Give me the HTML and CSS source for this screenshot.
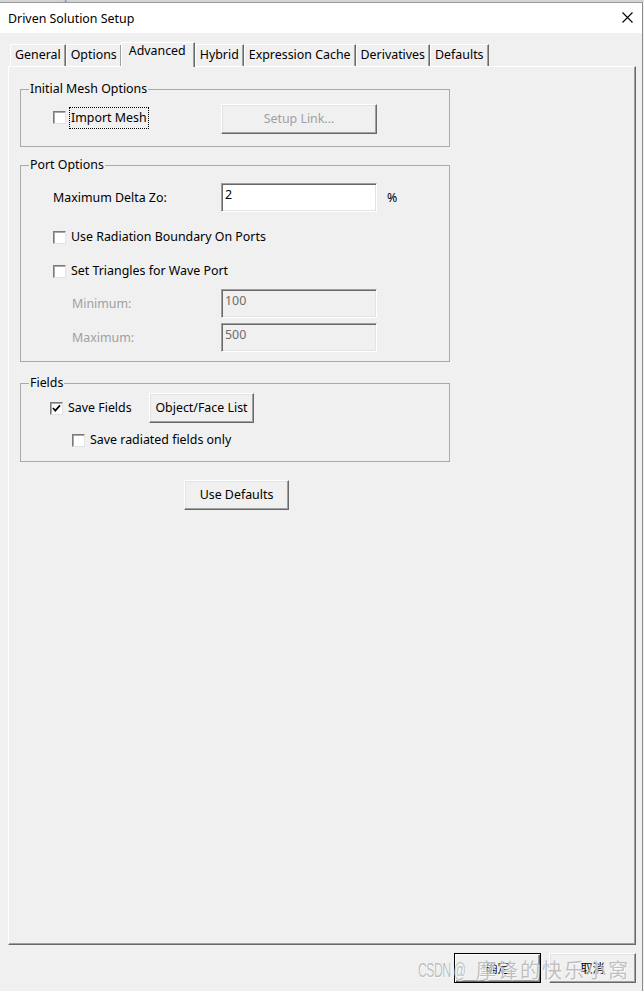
FILE: index.html
```html
<!DOCTYPE html>
<html>
<head>
<meta charset="utf-8">
<link rel="stylesheet" href="styles.css">
</head>
<body>
<div class="bgstrip"><span>• ru33Design1 - Modeler</span></div>
<div class="window">
  <div class="titlebar">
    <span class="title">Driven Solution Setup</span>
    <svg class="close" width="11" height="11" viewBox="0 0 11 11"><path d="M0.5 0.5 L10.5 10.5 M10.5 0.5 L0.5 10.5" stroke="#000" stroke-width="1.1" fill="none"/></svg>
  </div>
  <div class="body">
    <div class="tabs">
      <div class="tab">General</div>
      <div class="tab">Options</div>
      <div class="tab active">Advanced</div>
      <div class="tab">Hybrid</div>
      <div class="tab">Expression Cache</div>
      <div class="tab">Derivatives</div>
      <div class="tab">Defaults</div>
    </div>
    <div class="panel">
      <fieldset class="group g1">
        <legend>Initial Mesh Options</legend>
        <div class="row r-mesh">
          <div class="lead lead-wide">
            <span class="cb"></span>
            <span class="focus">Import Mesh</span>
          </div>
          <div class="btn btn-wide disabled">Setup Link...</div>
        </div>
      </fieldset>

      <fieldset class="group g2">
        <legend>Port Options</legend>
        <div class="row r-delta">
          <div class="lead lead-wide"><span class="lbl">Maximum Delta Zo:</span></div>
          <div class="edit">2</div>
          <span class="pct">%</span>
        </div>
        <div class="row r-check r-rad">
          <div class="lead lead-wide"><span class="cb"></span><span class="lbl">Use Radiation Boundary On Ports</span></div>
        </div>
        <div class="row r-check r-tri">
          <div class="lead lead-wide"><span class="cb"></span><span class="lbl">Set Triangles for Wave Port</span></div>
        </div>
        <div class="row r-min">
          <div class="lead lead-sub"><span class="lbl dim">Minimum:</span></div>
          <div class="edit off">100</div>
        </div>
        <div class="row r-max">
          <div class="lead lead-sub"><span class="lbl dim">Maximum:</span></div>
          <div class="edit off">500</div>
        </div>
      </fieldset>

      <fieldset class="group g3">
        <legend>Fields</legend>
        <div class="row r-save">
          <div class="lead lead-fields">
            <span class="cb on"><svg width="11" height="11" viewBox="0 0 11 11"><path d="M2 5 L4.3 7.6 L9 2.4" stroke="#000" stroke-width="1.7" fill="none"/></svg></span>
            <span class="lbl">Save Fields</span>
          </div>
          <div class="btn btn-obj">Object/Face List</div>
        </div>
        <div class="row r-check r-radonly">
          <div class="lead"><span class="cb"></span><span class="lbl">Save radiated fields only</span></div>
        </div>
      </fieldset>

      <div class="defaults-wrap">
        <div class="btn btn-def">Use Defaults</div>
      </div>
    </div>
    <div class="footer">
      <div class="btn btn-ok default">确定</div>
      <div class="btn btn-ok">取消</div>
      <div class="watermark"><span class="wm-latin">CSDN @</span><span class="wm-cjk">摩锋的快乐小窝</span></div>
    </div>
  </div>
</div>
</body>
</html>
```
FILE: styles.css
```css
* { box-sizing: border-box; }
html, body {
  margin: 0;
  padding: 0;
}
body {
  width: 644px;
  height: 991px;
  overflow: hidden;
  background: #f0f0f0;
  font-family: "Noto Sans", "Noto Sans CJK SC", sans-serif;
  font-size: 12.4px;
  line-height: 16px;
  color: #000;
}
.bgstrip {
  height: 2px;
  overflow: hidden;
  background: #d4d4d4;
  color: #8a8a8a;
  padding-left: 2px;
}
.bgstrip span {
  display: block;
  margin-top: -11px;
  font-size: 12px;
  line-height: 14px;
}
.window {
  width: 643px;
  height: 989px;
  border-top: 1px solid #9a9a9a;
  border-right: 1px solid #8c8c8c;
  background: #f0f0f0;
}
.titlebar {
  height: 30px;
  background: #fff;
  display: flex;
  align-items: center;
  padding-left: 8px;
  padding-right: 9px;
}
.title {
  flex: 1;
  font-size: 12.4px;
  padding-top: 1px;
}
.close {
  display: block;
  margin-top: -1px;
}
.body {
  display: flex;
  flex-direction: column;
}
.tabs {
  display: flex;
  align-items: flex-end;
  height: 24px;
  margin-top: 9px;
  padding-left: 10px;
}
.tab {
  height: 22px;
  padding: 2px 4px 0 4px;
  border-top: 1px solid #fff;
  border-left: 1px solid #fff;
  border-right: 1px solid #696969;
  box-shadow: inset -1px 0 #a0a0a0;
  white-space: nowrap;
  background: #f0f0f0;
}
.tab.active {
  height: 25px;
  margin: 0 -1px -1px -1px;
  padding: 0 8px 0 7px;
  position: relative;
  z-index: 1;
}
.tab.active + .tab { margin-left: 1px; }
.panel {
  margin-left: 8px;
  width: 628px;
  height: 879px;
  border-top: 1px solid #fff;
  border-left: 1px solid #fff;
  border-right: 1px solid #696969;
  border-bottom: 1px solid #696969;
  box-shadow: inset -1px -1px #a0a0a0;
  padding-left: 11px;
  padding-top: 14px;
}
.group {
  width: 430px;
  margin: 0;
  padding: 0;
  border: 1px solid #a9a9a9;
  min-width: 0;
}
.group legend {
  margin-left: 8px;
  padding: 0 1px;
  line-height: 16px;
}
.g1 { padding-bottom: 12px; }
.g2 { margin-top: 10px; padding-bottom: 9px; }
.g3 { margin-top: 13px; padding-bottom: 13px; }
.row {
  display: flex;
  align-items: center;
  padding-left: 32px;
}
.lead {
  display: flex;
  align-items: center;
  flex: none;
}
.lead-wide { width: 168px; }
.lead-sub { padding-left: 19px; width: 168px; }
.lead-fields { width: 99px; }
.r-mesh { margin-top: 7px; height: 30px; }
.r-mesh .cb { margin-top: -3px; }
.r-delta { margin-top: 10px; height: 29px; }
.r-check { height: 16px; }
.r-rad { margin-top: 17px; }
.r-tri { margin-top: 18px; }
.r-min { margin-top: 10px; height: 29px; }
.r-max { margin-top: 5px; height: 29px; }
.r-save { margin-top: 2px; height: 30px; padding-left: 29px; }
.r-radonly { margin-top: 9px; padding-left: 51px; }
.cb {
  display: inline-block;
  flex: none;
  width: 13px;
  height: 13px;
  background: #fff;
  border: 1px solid;
  border-color: #7a7a7a #e3e3e3 #e3e3e3 #7a7a7a;
  box-shadow: inset 1px 1px #a9a9a9;
  margin-right: 5px;
}
.cb svg { display: block; }
.lbl { white-space: nowrap; }
.focus {
  outline: 1px dotted #000;
  outline-offset: 0;
  padding: 2px 1px 2px 1px;
  line-height: 16px;
  margin-left: -1px;
  margin-top: -3px;
  white-space: nowrap;
}
.dim { color: #a0a0a0; }
.btn {
  display: flex;
  align-items: center;
  justify-content: center;
  flex: none;
  height: 30px;
  background: #f0f0f0;
  border: 1px solid;
  border-color: #fff #696969 #696969 #fff;
  box-shadow: inset -1px -1px #a0a0a0, inset 1px 1px #e3e3e3;
  white-space: nowrap;
}
.btn.disabled { color: #a0a0a0; }
.btn-wide { width: 156px; }
.btn-obj { width: 105px; }
.btn-def { width: 105px; }
.edit {
  flex: none;
  width: 156px;
  height: 29px;
  background: #fff;
  border: 1px solid;
  border-color: #a0a0a0 #fff #fff #a0a0a0;
  box-shadow: inset 1px 1px #696969, inset -1px -1px #e3e3e3;
  padding: 3px 3px 0 3px;
}
.edit.off {
  background: #f0f0f0;
  color: #6d6d6d;
}
.pct { margin-left: 10px; }
.defaults-wrap {
  display: flex;
  width: 430px;
  margin-top: 18px;
  padding-left: 164px;
}
.footer {
  display: flex;
  justify-content: flex-end;
  gap: 8px;
  padding-right: 6px;
  margin-top: 8px;
  position: relative;
}
.btn-ok {
  width: 87px;
  height: 30px;
  font-family: "Noto Sans CJK SC", sans-serif;
  font-size: 12px;
}
.btn.default {
  border-color: #000;
  box-shadow: inset 1px 1px #fff, inset -1px -1px #696969, inset -2px -2px #a0a0a0;
}
.watermark {
  position: absolute;
  left: 418px;
  top: 5px;
  white-space: nowrap;
  color: rgba(150, 150, 150, 0.6);
  text-shadow: 0 0 1px rgba(255,255,255,0.8), 1px 1px 0 rgba(255,255,255,0.7);
  font-size: 21px;
  line-height: 24px;
  pointer-events: none;
  display: flex;
  align-items: center;
}
.wm-latin {
  font-family: "Liberation Sans", sans-serif;
  display: inline-block;
  font-size: 20px;
  letter-spacing: -1px;
  transform: scaleX(0.62);
  transform-origin: left center;
  width: 58px;
}
.wm-cjk {
  font-family: "Noto Sans CJK SC", sans-serif;
  font-size: 20px;
  letter-spacing: 2px;
}
```
